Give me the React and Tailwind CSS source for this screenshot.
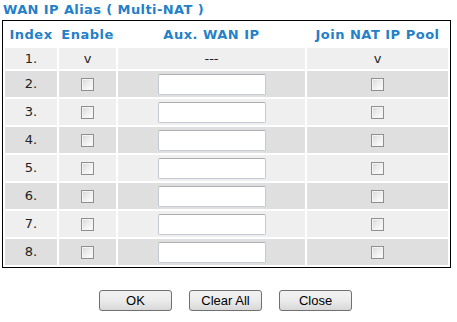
import React from 'react';

const rows = [2, 3, 4, 5, 6, 7, 8];

const Checkbox = () => (
  <span className="inline-block w-[13px] h-[13px] border border-[#8e8f8f] bg-gradient-to-br from-[#d6d6d6] via-[#eeeeee] to-[#ffffff] align-middle shadow-[inset_0_0_0_1px_#f4f4f4]" />
);

const Button = ({ children }) => (
  <button className="w-[73px] h-[21px] rounded-[3px] border border-[#707070] bg-gradient-to-b from-[#f2f2f2] via-[#ebebeb] to-[#d8d8d8] text-[13px] text-black font-['Liberation_Sans',Arial,sans-serif] leading-none">
    {children}
  </button>
);

export default function App() {
  return (
    <div className="w-[457px] h-[322px] bg-white font-['DejaVu_Sans',Verdana,sans-serif] text-[13px]">
      <div className="pl-[3px] pt-[2px] h-[20px] font-bold text-[#2480c8] leading-[16px] tracking-[0.4px]">
        WAN IP Alias ( Multi-NAT )
      </div>
      <table className="ml-[2px] w-[449px] border border-black border-separate border-spacing-[2px]">
        <thead>
          <tr className="h-[23px] text-[#2480c8] font-bold tracking-[0.5px]">
            <th className="w-[52px] p-0">Index</th>
            <th className="w-[57px] p-0">Enable</th>
            <th className="w-[187px] p-0">Aux. WAN IP</th>
            <th className="p-0">Join NAT IP Pool</th>
          </tr>
        </thead>
        <tbody className="text-[#222]">
          <tr className="h-[21px] bg-[#efefef] text-center">
            <td className="p-0">1.</td>
            <td className="p-0">v</td>
            <td className="p-0">---</td>
            <td className="p-0">v</td>
          </tr>
          {rows.map((n) => (
            <tr
              key={n}
              className={`h-[26px] text-center ${n % 2 === 0 ? 'bg-[#dfdfdf]' : 'bg-[#efefef]'}`}
            >
              <td className="p-0">{n}.</td>
              <td className="p-0">
                <Checkbox />
              </td>
              <td className="p-0">
                <input
                  type="text"
                  className="w-[108px] h-[21px] bg-white border border-[#c5c9d1] border-t-[#abadb3] rounded-[2px] align-middle outline-none"
                />
              </td>
              <td className="p-0">
                <Checkbox />
              </td>
            </tr>
          ))}
        </tbody>
      </table>
      <div className="flex gap-[17px] mt-[22px] pl-[99px]">
        <Button>OK</Button>
        <Button>Clear All</Button>
        <Button>Close</Button>
      </div>
    </div>
  );
}
